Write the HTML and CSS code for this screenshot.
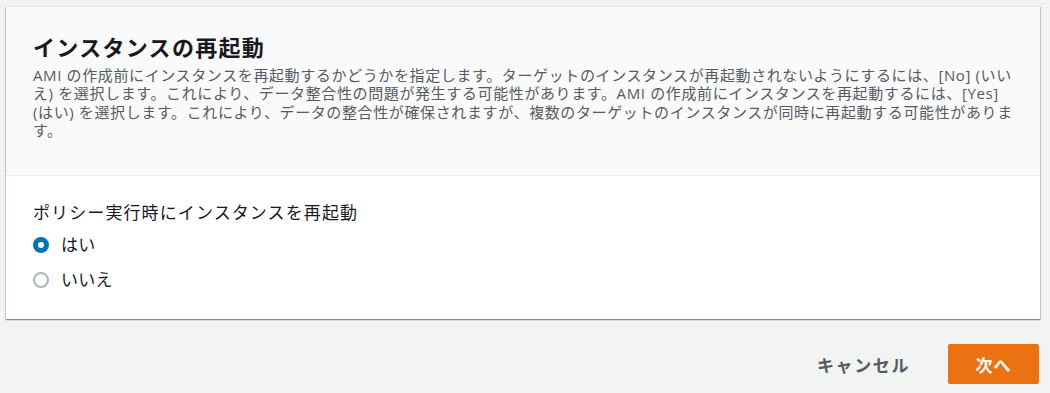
FILE: index.html
```html
<!DOCTYPE html>
<html lang="ja">
<head>
<meta charset="utf-8">
<link rel="stylesheet" href="styles.css">
</head>
<body>
<div class="page">
  <section class="card">
    <header class="card-header">
      <h2 class="title">インスタンスの再起動</h2>
      <p class="desc">AMI の作成前にインスタンスを再起動するかどうかを指定します。ターゲットのインスタンスが再起動されないようにするには、[No] (いいえ) を選択します。これにより、データ整合性の問題が発生する可能性があります。AMI の作成前にインスタンスを再起動するには、[Yes] (はい) を選択します。これにより、データの整合性が確保されますが、複数のターゲットのインスタンスが同時に再起動する可能性があります。</p>
    </header>
    <div class="card-body">
      <div class="field-label">ポリシー実行時にインスタンスを再起動</div>
      <label class="radio"><span class="dot checked"></span><span>はい</span></label>
      <label class="radio"><span class="dot"></span><span>いいえ</span></label>
    </div>
  </section>
  <footer class="actions">
    <button class="btn-link">キャンセル</button>
    <button class="btn-primary">次へ</button>
  </footer>
</div>
</body>
</html>
```

FILE: styles.css
```css
* { box-sizing: border-box; }
html, body { margin: 0; padding: 0; background: #f2f3f3; }
body {
  font-family: "Open Sans", "Noto Sans CJK JP", sans-serif;
  color: #16191f;
}
.page {
  padding: 6px 10px 0 6px;
}
.card {
  background: #fff;
  border-top: 1px solid #eaeded;
  box-shadow: 0 1px 1px 0 rgba(0,28,36,.3), 1px 1px 1px 0 rgba(0,28,36,.15), -1px 1px 1px 0 rgba(0,28,36,.15);
}
.card-header {
  background: #fafafa;
  border-bottom: 1px solid #eaeded;
  padding: 25px 27px 36px 27px;
}
.title {
  margin: 0;
  font-size: 22px;
  font-weight: 700;
  letter-spacing: 1.3px;
  line-height: 30px;
}
.desc {
  margin: 4px 0 0;
  font-size: 15px;
  letter-spacing: 0.62px;
  line-height: 18.3px;
  color: #545b64;
}
.card-body {
  padding: 26px 27px 22px;
}
.field-label {
  font-size: 17px;
  letter-spacing: 1.1px;
  line-height: 22px;
  color: #16191f;
  margin-bottom: 3px;
}
.radio {
  display: flex;
  align-items: center;
  gap: 12px;
  font-size: 17px;
  letter-spacing: 0.3px;
  line-height: 35px;
  color: #16191f;
}
.dot {
  width: 16px;
  height: 16px;
  border-radius: 50%;
  border: 2px solid #aab7b8;
  background: #fff;
}
.dot.checked {
  border: 5px solid #0073bb;
}
.actions {
  display: flex;
  justify-content: flex-end;
  align-items: center;
  gap: 38px;
  padding-top: 25px;
  padding-right: 1px;
}
.btn-link {
  background: none;
  border: 0;
  font-family: inherit;
  font-size: 17px;
  font-weight: 700;
  letter-spacing: 1.6px;
  color: #545b64;
  padding: 0;
}
.btn-primary {
  background: #ec7211;
  border: 0;
  border-radius: 2px;
  color: #fff;
  font-family: inherit;
  font-size: 17px;
  font-weight: 700;
  letter-spacing: 1px;
  width: 91px;
  height: 40px;
}
```
